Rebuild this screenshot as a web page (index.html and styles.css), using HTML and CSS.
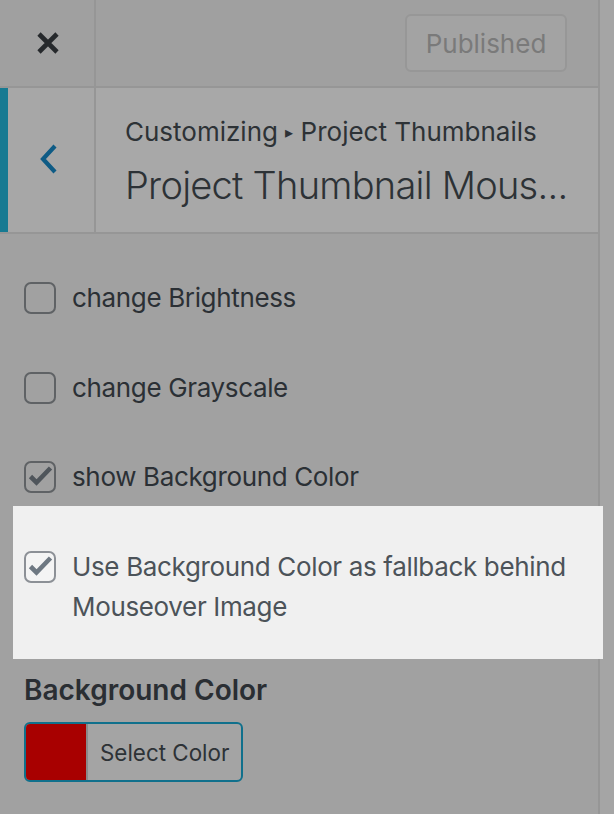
FILE: index.html
```html
<!DOCTYPE html>
<html lang="en">
<head>
<meta charset="utf-8">
<title>Customizer</title>
<link rel="stylesheet" href="styles.css">
</head>
<body>
<div class="app">
  <aside class="sidebar">
    <header class="topbar">
      <button class="close" aria-label="Close">
        <svg width="24" height="24" viewBox="0 0 24 24"><path d="M3 3 L21 21 M21 3 L3 21" stroke="#26292c" stroke-width="4.6" fill="none"/></svg>
      </button>
      <div class="topbar-actions">
        <button class="publish">Published</button>
      </div>
    </header>
    <div class="section-head">
      <button class="back" aria-label="Back">
        <svg width="20" height="30" viewBox="0 0 20 30"><path d="M16 2 L4 15 L16 28" stroke="#0e5b85" stroke-width="4.2" fill="none"/></svg>
      </button>
      <div class="section-titles">
        <div class="crumb">Customizing <span class="arrow">▸</span> Project Thumbnails</div>
        <h2 class="title">Project Thumbnail Mous...</h2>
      </div>
    </div>
    <ul class="controls">
      <li class="check-row">
        <span class="box"></span>
        <span class="label">change Brightness</span>
      </li>
      <li class="check-row">
        <span class="box"></span>
        <span class="label">change Grayscale</span>
      </li>
      <li class="check-row">
        <span class="box">
          <svg width="28" height="28" viewBox="0 0 28 28"><path d="M4.5 13.5 L10.5 19.5 L24.5 5" stroke="#4f555b" stroke-width="4.6" fill="none"/></svg>
        </span>
        <span class="label">show Background Color</span>
      </li>
      <li class="check-row highlight">
        <span class="box">
          <svg width="28" height="28" viewBox="0 0 28 28"><path d="M4.5 13.5 L10.5 19.5 L24.5 5" stroke="#6e7882" stroke-width="4.6" fill="none"/></svg>
        </span>
        <span class="label">Use Background Color as fallback behind Mouseover Image</span>
      </li>
      <li class="color-control">
        <span class="control-title">Background Color</span>
        <button class="color-btn">
          <span class="swatch"></span>
          <span class="color-text">Select Color</span>
        </button>
      </li>
    </ul>
  </aside>
  <div class="preview"></div>
</div>
</body>
</html>
```

FILE: styles.css
```css
* { box-sizing: border-box; }

html, body {
  margin: 0;
  padding: 0;
}

body {
  width: 614px;
  height: 814px;
  overflow: hidden;
  background: #a5a5a5;
  font-family: Inter, "Noto Sans", sans-serif;
  color: #2b3035;
}

.app {
  display: flex;
  height: 814px;
}

.sidebar {
  width: 600px;
  flex: none;
  height: 814px;
  background: #a1a1a1;
  border-right: 2px solid #969696;
  display: flex;
  flex-direction: column;
}

.preview {
  flex: 1;
  background: #a5a5a5;
}

/* top bar */
.topbar {
  height: 88px;
  flex: none;
  display: flex;
  background: #a0a0a0;
  border-bottom: 2px solid #969696;
}

.close {
  width: 96px;
  height: 86px;
  border: 0;
  border-right: 2px solid #969696;
  background: transparent;
  padding: 0;
  display: flex;
  align-items: center;
  justify-content: center;
}

.close svg { display: block; margin-left: 2px; margin-top: -1px; }

.topbar-actions {
  flex: 1;
  display: flex;
  align-items: center;
  justify-content: flex-end;
  padding-right: 31px;
}

.publish {
  width: 162px;
  height: 58px;
  border: 2px solid #979797;
  border-radius: 6px;
  background: #a3a3a3;
  color: #7a7a7a;
  font-family: Inter, "Noto Sans", sans-serif;
  font-size: 26px;
  padding: 0;
}

/* section heading */
.section-head {
  height: 146px;
  flex: none;
  display: flex;
  background: #a8a8a8;
  border-bottom: 2px solid #969696;
}

.back {
  width: 96px;
  height: 144px;
  padding: 0;
  border: 0;
  border-left: 8px solid #167a92;
  border-right: 2px solid #969696;
  background: #a7a7a7;
  display: flex;
  align-items: center;
  justify-content: center;
}

.back svg { display: block; margin-left: -5px; margin-top: -3px; }

.section-titles {
  flex: 1;
  min-width: 0;
  padding: 26px 10px 0 29px;
}

.crumb {
  font-size: 26px;
  line-height: 36px;
  color: #2d3236;
  white-space: nowrap;
}

.arrow {
  font-size: 16px;
  vertical-align: 3px;
}

.title {
  margin: 11px 0 0;
  font-size: 38px;
  line-height: 48px;
  font-weight: 350;
  letter-spacing: -0.75px;
  color: #2d3236;
  white-space: nowrap;
}

/* controls */
.controls {
  list-style: none;
  margin: 0;
  padding: 44px 16px 0 24px;
}

.check-row {
  display: flex;
  align-items: flex-start;
  gap: 16px;
  margin-bottom: 49.5px;
}

.box {
  width: 32px;
  height: 32px;
  flex: none;
  margin-top: 4px;
  border: 2px solid #5f6265;
  border-radius: 7px;
  display: flex;
  align-items: center;
  justify-content: center;
}

.box svg { display: block; }

.label {
  font-size: 26px;
  line-height: 40px;
  letter-spacing: -0.35px;
  color: #2b3035;
}

.check-row.highlight {
  margin: -40.5px -21px 0 -11px;
  padding: 41px 21px 32px 11px;
  background: #f0f0f0;
  position: relative;
}

.highlight .box {
  border-color: #8c9096;
  background: #f4f4f4;
}

.highlight .label {
  color: #4c5359;
}

.color-control {
  margin-top: 13px;
}

.control-title {
  display: block;
  font-size: 28px;
  line-height: 36px;
  font-weight: 600;
  color: #2a2e33;
}

.color-btn {
  margin-top: 14px;
  width: 219px;
  height: 60px;
  padding: 0;
  border: 2px solid #10708c;
  border-radius: 6px;
  background: #a4a4a4;
  display: flex;
  align-items: stretch;
  overflow: hidden;
}

.swatch {
  width: 62px;
  flex: none;
  background: #a80000;
  border-right: 2px solid #8a8a8a;
}

.color-text {
  flex: 1;
  display: flex;
  align-items: center;
  padding-left: 12px;
  font-family: Inter, "Noto Sans", sans-serif;
  font-size: 22.4px;
  color: #2d3236;
}
```
